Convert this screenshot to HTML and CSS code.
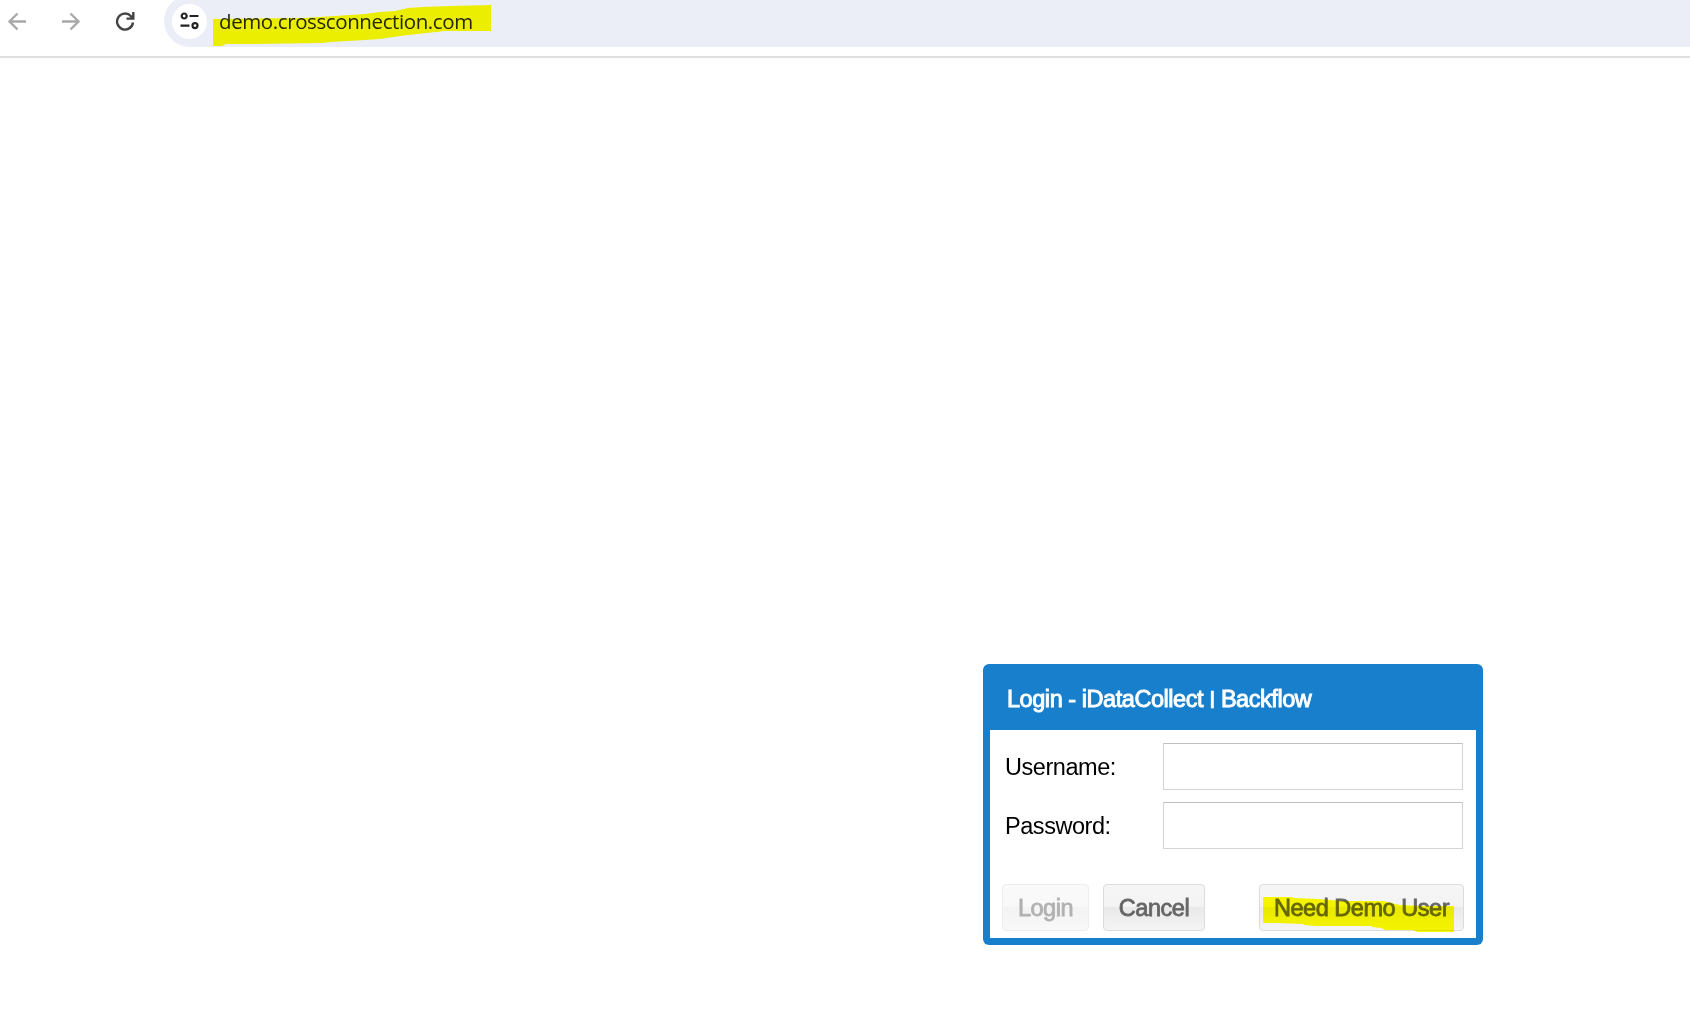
FILE: index.html
```html
<!DOCTYPE html>
<html lang="en">
<head>
  <meta charset="utf-8">
  <title>Login - iDataCollect | Backflow</title>
  <link rel="stylesheet" href="styles.css">
</head>
<body>
  <div class="toolbar">
    <div class="nav">
      <svg class="icon off" viewBox="0 0 20 20"><path d="M19 10.5H2.5M10.5 2.5l-8 8 8 8"/></svg>
      <svg class="icon off" viewBox="0 0 20 20"><path d="M1 10.5h16M9.5 2.5l8 8-8 8"/></svg>
      <svg class="icon" viewBox="0 0 20 20"><path d="M18 11.5A8 8 0 1 1 16 5.2L18 7.4M18.3 1V7.6H11.5"/></svg>
    </div>
    <div class="omnibox">
      <div class="site-info">
        <svg class="tune" viewBox="0 0 20 18"><circle cx="4.2" cy="4" r="2.5"/><path d="M9.5 4h9M.5 13.6h9"/><circle cx="15" cy="13.6" r="2.5"/></svg>
      </div>
      <div class="url">demo.crossconnection.com</div>
      <svg class="marker marker-url" viewBox="0 0 278 42"><path d="M0 14L90 13 122 11 152 9 167 7 182 6 195 3 210 2 238 1 278 0V26H232L204 29 187 31 167 34 152 35 118 37 109 38 36 39H13L9 41H0z"/></svg>
    </div>
  </div>
  <div class="page">
    <form class="dialog">
      <div class="title">Login - iDataCollect <span class="bar">|</span> Backflow</div>
      <div class="content">
        <div class="row"><label for="user">Username:</label><input type="text" id="user"></div>
        <div class="row"><label for="pass">Password:</label><input type="password" id="pass"></div>
        <div class="buttons">
          <button type="button" class="login" disabled>Login</button>
          <button type="button" class="cancel">Cancel</button>
          <button type="button" class="demo">Need Demo User
            <svg class="marker marker-demo" viewBox="0 0 191 35"><path d="M0 0H30V1L55 2 80 4H120L125 5 132 7 137 8 160 9H191V35H155L150 33H122L118 31 109 30V29H53L41 28V27L15 26H0z"/></svg>
          </button>
        </div>
      </div>
    </form>
  </div>
</body>
</html>
```
FILE: styles.css
```css
html, body {
  height: 100%;
  margin: 0;
}
body {
  display: flex;
  flex-direction: column;
  overflow: hidden;
  background: #fff;
  font-family: "Liberation Sans", Arial, sans-serif;
  font-size: 23.5px;
  letter-spacing: -0.45px;
}

/* browser bar */
.toolbar {
  flex: none;
  display: flex;
  height: 56px;
  border-bottom: 2px solid #e0e0e0;
}
.nav {
  display: flex;
  gap: 34px;
  width: 157px;
  padding: 11px 0 0 7px;
}
.icon {
  width: 20px;
  height: 20px;
  fill: none;
  stroke: #444;
  stroke-width: 2.4;
}
.icon.off {
  stroke: #a9a9a9;
}
.omnibox {
  position: relative;
  flex: 1;
  display: flex;
  align-items: center;
  height: 52px;
  margin-top: -5px;
  padding-left: 8px;
  box-sizing: border-box;
  border-radius: 26px 0 0 26px;
  background: #ebeef7;
}
.site-info {
  display: flex;
  align-items: center;
  justify-content: center;
  width: 35px;
  height: 35px;
  border-radius: 50%;
  background: #fff;
}
.tune {
  width: 20px;
  height: 18px;
  fill: none;
  stroke: #222;
  stroke-width: 2.2;
}
.url {
  margin-left: 12px;
  font: 20.5px/28px "Open Sans", sans-serif;
  letter-spacing: -0.4px;
  color: #25272c;
}

/* highlighter strokes */
.marker {
  position: absolute;
  fill: #ff0;
  mix-blend-mode: multiply;
  pointer-events: none;
}
.marker-url {
  left: 49px;
  top: 10px;
  width: 278px;
  height: 42px;
}
.marker-demo {
  left: 3px;
  top: 12px;
  width: 191px;
  height: 35px;
}

/* login window */
.page {
  flex: 1;
  display: flex;
  align-items: flex-end;
  justify-content: flex-end;
  padding: 0 207px 70px 0;
}
.dialog {
  width: 500px;
  height: 281px;
  padding: 0 7px 7px;
  box-sizing: border-box;
  display: flex;
  flex-direction: column;
  border-radius: 6px;
  background: #177fcc;
}
.title {
  height: 66px;
  padding: 1px 0 0 17px;
  box-sizing: border-box;
  line-height: 68px;
  color: #fff;
  -webkit-text-stroke: 0.9px #fff;
  white-space: nowrap;
}
.bar {
  display: inline-block;
  line-height: 1;
  transform: translateY(-1px) scaleY(0.78);
}
.content {
  flex: 1;
  padding: 13px 12px 7px;
  background: #fff;
}
.row {
  display: flex;
  align-items: center;
  justify-content: space-between;
  height: 47px;
  margin-bottom: 12px;
  padding: 0 1px 0 3px;
}
.row label {
  padding-top: 2px;
}
.row input {
  width: 300px;
  height: 47px;
  box-sizing: border-box;
  border: 1px solid #d5d5d5;
  border-top-color: #c0c0c0;
  background: #fff;
}
.buttons {
  display: flex;
  margin-top: 35px;
}
.buttons button {
  position: relative;
  height: 47px;
  padding: 2px 0 0;
  box-sizing: border-box;
  border: 1px solid #dcdcdc;
  border-radius: 4px;
  background: linear-gradient(#f6f6f6, #f3f3f3 50%, #e9e9e9 50%, #f4f4f4);
  color: #666;
  font: inherit;
  letter-spacing: inherit;
  -webkit-text-stroke: 0.8px;
}
.buttons .login {
  width: 87px;
  opacity: 0.5;
}
.buttons .cancel {
  width: 102px;
  margin-left: 14px;
}
.buttons .demo {
  width: 205px;
  margin-left: auto;
}
```
